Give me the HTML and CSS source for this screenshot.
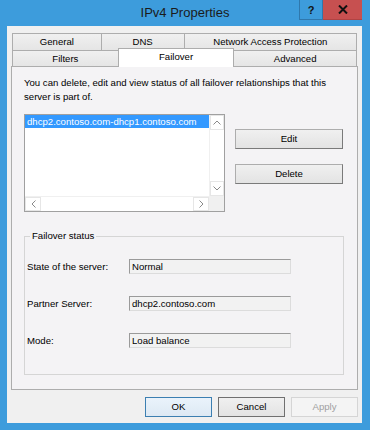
FILE: index.html
```html
<!DOCTYPE html>
<html>
<head>
<meta charset="utf-8">
<link rel="stylesheet" href="styles.css">
</head>
<body>
<div class="window">
  <div class="titlebar">
    <div class="spacer"></div>
    <div class="title">IPv4 Properties</div>
    <div class="caption-btns">
      <div class="cap help">?</div>
      <div class="cap close">
        <svg width="10" height="9" viewBox="0 0 10 9"><path d="M1 0.5 L9 8.5 M9 0.5 L1 8.5" stroke="#111" stroke-width="2" fill="none"/></svg>
      </div>
    </div>
  </div>
  <div class="client">
    <div class="tabs">
      <div class="tabrow row1">
        <div class="tab t-general">General</div>
        <div class="tab t-dns">DNS</div>
        <div class="tab t-nap">Network Access Protection</div>
      </div>
      <div class="tabrow row2">
        <div class="tab t-filters">Filters</div>
        <div class="tab t-failover selected">Failover</div>
        <div class="tab t-advanced">Advanced</div>
      </div>
    </div>
    <div class="panel">
      <p class="desc">You can delete, edit and view status of all failover relationships that this server is part of.</p>
      <div class="list-area">
        <div class="listbox">
          <div class="list-main">
            <div class="list-items">
              <div class="item selected-item">dhcp2.contoso.com-dhcp1.contoso.com</div>
            </div>
            <div class="vscroll">
              <div class="sbtn">
                <svg width="8" height="5" viewBox="0 0 8 5"><path d="M0.5 4.5 L4 1 L7.5 4.5" stroke="#8a8a8a" stroke-width="1" fill="none"/></svg>
              </div>
              <div class="strack"></div>
              <div class="sbtn">
                <svg width="8" height="5" viewBox="0 0 8 5"><path d="M0.5 0.5 L4 4 L7.5 0.5" stroke="#8a8a8a" stroke-width="1" fill="none"/></svg>
              </div>
            </div>
          </div>
          <div class="list-bottom">
            <div class="hscroll">
              <div class="hbtn">
                <svg width="5" height="8" viewBox="0 0 5 8"><path d="M4.5 0.5 L1 4 L4.5 7.5" stroke="#8a8a8a" stroke-width="1" fill="none"/></svg>
              </div>
              <div class="htrack"></div>
              <div class="hbtn">
                <svg width="5" height="8" viewBox="0 0 5 8"><path d="M0.5 0.5 L4 4 L0.5 7.5" stroke="#8a8a8a" stroke-width="1" fill="none"/></svg>
              </div>
            </div>
            <div class="corner"></div>
          </div>
        </div>
        <div class="side-btns">
          <div class="btn">Edit</div>
          <div class="btn">Delete</div>
        </div>
      </div>
      <fieldset class="group">
        <legend>Failover status</legend>
        <div class="fields">
          <div class="lbl">State of the server:</div>
          <div class="field">Normal</div>
          <div class="lbl">Partner Server:</div>
          <div class="field">dhcp2.contoso.com</div>
          <div class="lbl">Mode:</div>
          <div class="field">Load balance</div>
        </div>
      </fieldset>
    </div>
    <div class="footer">
      <div class="btn fbtn default">OK</div>
      <div class="btn fbtn cancel">Cancel</div>
      <div class="btn fbtn disabled">Apply</div>
    </div>
  </div>
</div>
</body>
</html>
```
FILE: styles.css
```css
* { box-sizing: border-box; }
html, body { margin: 0; padding: 0; }
body {
  width: 370px;
  height: 430px;
  background: #3d9cdc;
  font-family: "Liberation Sans", Arial, sans-serif;
  font-size: 9.6px;
  color: #000;
  overflow: hidden;
}
.window { width: 370px; height: 430px; display: flex; flex-direction: column; }
.titlebar {
  height: 26px;
  display: grid;
  grid-template-columns: 71px 1fr 71px;
  align-items: start;
}
.title {
  text-align: center;
  font-size: 13px;
  line-height: 26px;
  color: #1b1b1b;
}
.caption-btns { display: flex; height: 20px; }
.cap { height: 20px; display: flex; align-items: center; justify-content: center; }
.help {
  width: 24px;
  border: 1px solid #2f78ad;
  border-top: none;
  font-weight: bold;
  font-size: 11px;
  color: #111;
}
.close {
  width: 39px;
  background: #c75050;
  border-bottom: 1px solid #b04343;
}
.client {
  margin: 0 8px 7px 7px;
  flex: 1;
  background: #f0f0f0;
  padding: 7px 4px 0 4px;
  display: flex;
  flex-direction: column;
}
.tabs { padding: 0 1px; }
.tabrow { display: flex; }
.tab {
  border: 1px solid #adadad;
  border-bottom: none;
  background: linear-gradient(#f0f0f0, #e5e5e5);
  text-align: center;
  margin-left: -1px;
}
.tab:first-child { margin-left: 0; }
.row1 { height: 17px; }
.row1 .tab { line-height: 16px; }
.row2 { height: 16px; position: relative; z-index: 2; align-items: flex-end; }
.row2 .tab { line-height: 16px; height: 16px; }
.t-general { width: 90px; }
.t-dns { width: 84px; }
.t-nap { width: 174px; }
.t-filters { width: 107px; }
.t-failover { width: 117px; }
.t-advanced { width: 124px; }
.row2 .tab.selected {
  background: #fff;
  height: 19px;
  margin-bottom: -1px;
  line-height: 15px;
  position: relative;
}
.panel {
  height: 324px;
  border: 1px solid #adadad;
  background: #f4f3f5;
  padding: 9px 13px 0 12px;
}
.desc {
  margin: 0;
  line-height: 14px;
  width: 310px;
}
.list-area { display: flex; margin-top: 10px; gap: 10px; }
.listbox {
  width: 201px;
  height: 98px;
  border: 1px solid #a0a0a0;
  background: #fff;
  display: flex;
  flex-direction: column;
}
.list-main { flex: 1; display: flex; }
.list-items { flex: 1; }
.item { height: 13px; line-height: 13px; padding-left: 2px; white-space: nowrap; }
.selected-item { background: #3399ff; color: #fff; }
.vscroll { width: 15px; display: flex; flex-direction: column; background: #fff; border-left: 1px solid #f0f0f0; }
.sbtn { height: 15px; display: flex; align-items: center; justify-content: center; border: 1px solid #e6e6e6; }
.strack { flex: 1; }
.list-bottom { height: 15px; display: flex; }
.hscroll { flex: 1; display: flex; background: #fff; border-top: 1px solid #f0f0f0; }
.hbtn { width: 16px; display: flex; align-items: center; justify-content: center; border: 1px solid #e6e6e6; }
.htrack { flex: 1; }
.corner { width: 15px; background: #f0f0f0; }
.side-btns { display: flex; flex-direction: column; gap: 15px; padding-top: 15px; }
.btn {
  width: 108px;
  height: 20px;
  border: 1px solid #adadad;
  border-right-color: #7a7a7a;
  border-bottom-color: #7a7a7a;
  background: linear-gradient(#f0f0f0, #e3e3e3);
  text-align: center;
  line-height: 18px;
}
.group {
  margin: 17px 0 0 0;
  width: 320px;
  border: 1px solid #d5d5d5;
  padding: 0 2px 26px 2px;
}
.group legend {
  margin-left: 3px;
  padding: 0 2px;
  line-height: 14px;
}
.fields {
  display: grid;
  grid-template-columns: 102px 162px;
  grid-auto-rows: 15px;
  row-gap: 22px;
  padding-top: 16px;
  align-items: center;
}
.field {
  height: 15px;
  border: 1px solid #dcdcdc;
  border-top-color: #9a9a9a;
  border-left-color: #9a9a9a;
  background: #f2f2f2;
  line-height: 13px;
  padding-left: 2px;
  white-space: nowrap;
}
.footer {
  display: flex;
  justify-content: flex-end;
  gap: 6px;
  margin-top: 7px;
}
.fbtn { width: 67px; }
.default { border: 1px solid #3c7fb1; background: linear-gradient(#eaf3fb, #dde9f4); }
.cancel { border-color: #707070; }
.disabled { border: 1px solid #d5d5d5; background: #f4f4f4; color: #a0a0a0; }
```
